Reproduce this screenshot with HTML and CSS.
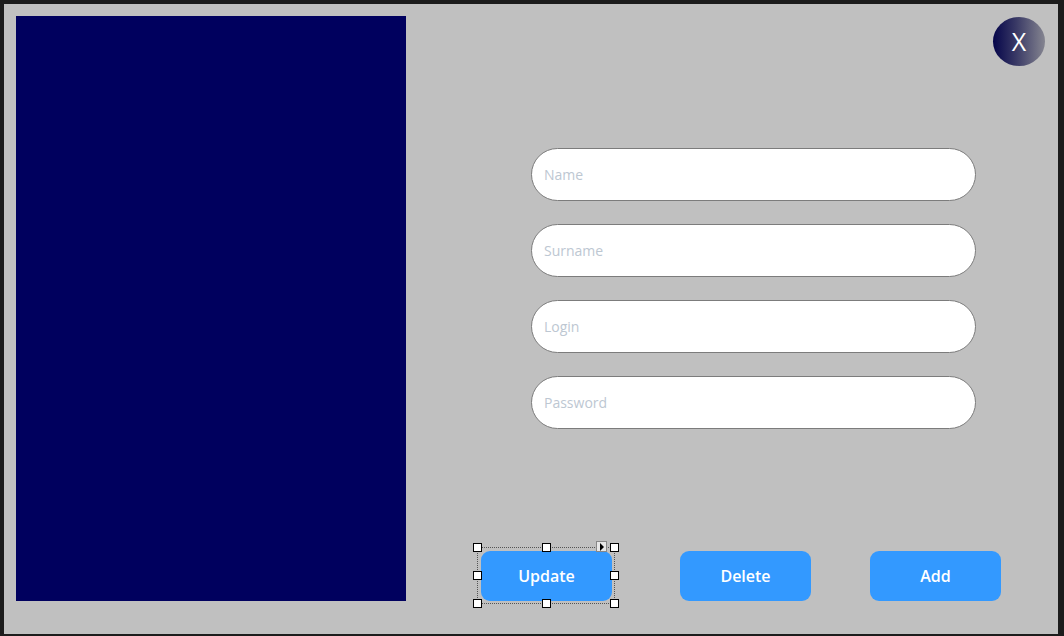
FILE: index.html
```html
<!DOCTYPE html>
<html>
<head>
<meta charset="utf-8">
<link rel="stylesheet" href="styles.css">
</head>
<body>
<div class="frame">
  <div class="window">
    <div class="panel"></div>
    <div class="side">
      <div class="topbar">
        <button class="close">X</button>
      </div>
      <div class="fields">
        <input class="field" type="text" placeholder="Name">
        <input class="field" type="text" placeholder="Surname">
        <input class="field" type="text" placeholder="Login">
        <input class="field" type="password" placeholder="Password">
      </div>
      <div class="actions">
        <div class="selected">
          <button class="btn">Update</button>
          <div class="sel-box"></div>
          <span class="h h-tl"></span><span class="h h-tc"></span><span class="h h-tr"></span>
          <span class="h h-ml"></span><span class="h h-mr"></span>
          <span class="h h-bl"></span><span class="h h-bc"></span><span class="h h-br"></span>
          <span class="smart"><svg width="6" height="8" viewBox="0 0 6 8"><path d="M1 0 L5 4 L1 8 Z" fill="#000"/></svg></span>
        </div>
        <button class="btn btn-delete">Delete</button>
        <button class="btn btn-add">Add</button>
      </div>
    </div>
  </div>
</div>
</body>
</html>
```

FILE: styles.css
```css
* { box-sizing: border-box; }
html, body { margin: 0; padding: 0; }
body {
  width: 1064px;
  height: 636px;
  background: #1c1c1c;
  font-family: "Open Sans", "Noto Sans", sans-serif;
  overflow: hidden;
}
.frame {
  padding: 4px 6px 2px 4px;
  height: 636px;
}
.window {
  background: #c0c0c0;
  height: 630px;
  display: flex;
  padding: 12px 0 0 12px;
}
.panel {
  width: 390px;
  height: 585px;
  background: #00005e;
  flex: none;
}
.side {
  flex: 1;
  display: flex;
  flex-direction: column;
}
.topbar {
  display: flex;
  justify-content: flex-end;
  padding: 1px 13px 0 0;
  height: 83px;
}
.close {
  width: 52px;
  height: 49px;
  border-radius: 50%;
  border: none;
  background: linear-gradient(to right, #05054a 0%, #3a3a66 45%, #858590 100%);
  color: #fff;
  font-family: "Open Sans", "Noto Sans", sans-serif;
  font-size: 25px;
  font-weight: 500;
  line-height: 49px;
  padding: 0;
}
.fields {
  display: flex;
  flex-direction: column;
  gap: 23px;
  padding-left: 125px;
  margin-top: 49px;
}
.field {
  width: 445px;
  height: 53px;
  border: 1px solid #7c7c7c;
  border-radius: 27px;
  background: #fff;
  padding: 0 0 0 12px;
  font-family: "Open Sans", "Noto Sans", sans-serif;
  font-size: 14px;
  outline: none;
}
.field::placeholder { color: #bdc7d2; }
.actions {
  display: flex;
  align-items: center;
  margin-top: 122px;
  padding-left: 75px;
}
.btn {
  width: 131px;
  height: 50px;
  border: none;
  border-radius: 9px;
  background: #3399ff;
  color: #fff;
  font-family: "Open Sans", "Noto Sans", sans-serif;
  font-size: 16px;
  font-weight: 600;
  padding: 0;
}
.btn-delete { margin-left: 68px; }
.btn-add { margin-left: 59px; }
.selected {
  position: relative;
  width: 131px;
  height: 50px;
}
.sel-box {
  position: absolute;
  left: -4px; top: -4px; right: -3px; bottom: -3px;
  border: 1px dotted #555;
  pointer-events: none;
}
.h {
  position: absolute;
  width: 9px;
  height: 9px;
  background: #fff;
  border: 1px solid #000;
}
.h-tl { left: -8px; top: -8px; }
.h-tc { left: 61px; top: -8px; }
.h-tr { left: 129px; top: -8px; }
.h-ml { left: -8px; top: 20px; }
.h-mr { left: 129px; top: 20px; }
.h-bl { left: -8px; top: 48px; }
.h-bc { left: 61px; top: 48px; }
.h-br { left: 129px; top: 48px; }
.smart {
  position: absolute;
  left: 115px;
  top: -10px;
  width: 11px;
  height: 11px;
  background: #e8e8e8;
  border: 1px solid #888;
  display: flex;
  align-items: center;
  justify-content: center;
}
```
